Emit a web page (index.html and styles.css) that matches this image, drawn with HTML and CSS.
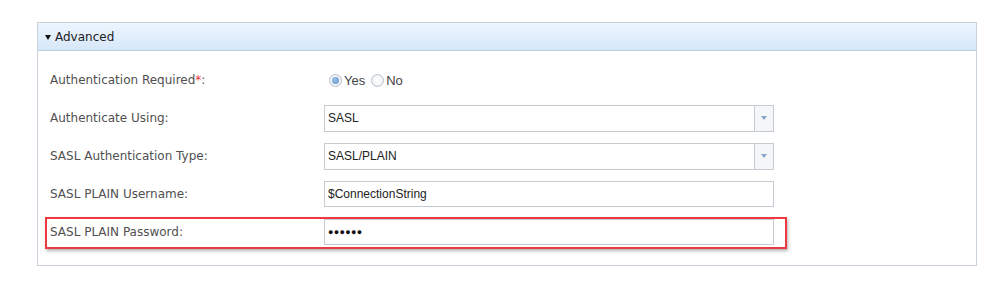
FILE: index.html
```html
<!DOCTYPE html>
<html>
<head>
<meta charset="utf-8">
<link rel="stylesheet" href="styles.css">
</head>
<body>
<div class="panel">
  <div class="panel-head"><span class="caret"></span>Advanced</div>
  <div class="panel-body">
    <div class="row">
      <div class="label">Authentication Required<span class="req">*</span>:</div>
      <div class="radios">
        <span class="radio checked"></span><span class="rtext">Yes</span>
        <span class="radio"></span><span class="rtext">No</span>
      </div>
    </div>
    <div class="row">
      <div class="label">Authenticate Using:</div>
      <div class="select"><span class="val">SASL</span><span class="btn"><span class="arrow"></span></span></div>
    </div>
    <div class="row">
      <div class="label">SASL Authentication Type:</div>
      <div class="select"><span class="val">SASL/PLAIN</span><span class="btn"><span class="arrow"></span></span></div>
    </div>
    <div class="row">
      <div class="label">SASL PLAIN Username:</div>
      <div class="input"><span class="val">$ConnectionString</span></div>
    </div>
    <div class="row highlight">
      <div class="label">SASL PLAIN Password:</div>
      <div class="input"><span class="val dots">&#9679;&#9679;&#9679;&#9679;&#9679;&#9679;</span></div>
    </div>
  </div>
</div>
</body>
</html>
```
FILE: styles.css
```css
html, body { margin: 0; padding: 0; background: #fff; }
body { padding: 22px 0 0 37px; font-family: "DejaVu Sans", Verdana, sans-serif; }
.panel {
  width: 938px;
  border: 1px solid #c9d1db;
  box-sizing: content-box;
}
.panel-head {
  height: 28px;
  box-sizing: border-box;
  background: linear-gradient(#edf5fe, #d7e7f9);
  border-bottom: 1px solid #b9cde3;
  display: flex;
  align-items: center;
  padding-left: 7px;
  font-size: 12px;
  color: #222;
}
.caret {
  width: 0; height: 0;
  border-left: 3.5px solid transparent;
  border-right: 3.5px solid transparent;
  border-top: 5px solid #111;
  margin-right: 4px;
  margin-top: 1px;
}
.panel-body { padding: 10px 0 14px 7px; }
.row {
  position: relative;
  width: 742px;
  height: 38px;
  display: flex;
  align-items: center;
  padding-left: 5px;
  box-sizing: border-box;
}
.label {
  width: 274px;
  font-size: 12px;
  color: #505050;
  flex: none;
}
.req { color: #e8333a; }
.radios { display: flex; align-items: center; font-family: "Liberation Sans", Arial, sans-serif; font-size: 13px; color: #444; padding-left: 5px; }
.radio {
  width: 11px; height: 11px;
  border-radius: 50%;
  border: 1px solid #b7bfc9;
  background: radial-gradient(#fff, #e8ecf0);
  box-sizing: content-box;
  margin-right: 2px;
  position: relative;
}
.radio.checked::after {
  content: "";
  position: absolute;
  left: 2px; top: 2px;
  width: 7px; height: 7px;
  border-radius: 50%;
  background: radial-gradient(circle at 40% 40%, #9fc4ea, #5a8fca);
}
.rtext { margin-right: 6px; }
.select, .input {
  width: 450px;
  height: 27px;
  box-sizing: border-box;
  border: 1px solid #c6cbd2;
  display: flex;
  align-items: center;
  font-family: "Liberation Sans", Arial, sans-serif;
  font-size: 12px;
  color: #222;
  background: #fff;
}
.input { height: 26px; }
.val { padding-left: 3px; flex: 1; }
.dots { font-size: 9px; letter-spacing: 0.3px; color: #111; }
.btn {
  width: 19px;
  height: 100%;
  border-left: 1px solid #c6cbd2;
  background: #f5f6f8;
  display: flex;
  align-items: center;
  justify-content: center;
  box-sizing: border-box;
}
.arrow {
  width: 0; height: 0;
  border-left: 3.5px solid transparent;
  border-right: 3.5px solid transparent;
  border-top: 4px solid #8aa6cb;
}
.highlight::after {
  content: "";
  position: absolute;
  left: 0; right: 0; top: 4px; bottom: 2px;
  border: 2px solid #ec3a40;
  box-shadow: 1px 2px 3px rgba(0,0,0,0.3);
  pointer-events: none;
}
```
